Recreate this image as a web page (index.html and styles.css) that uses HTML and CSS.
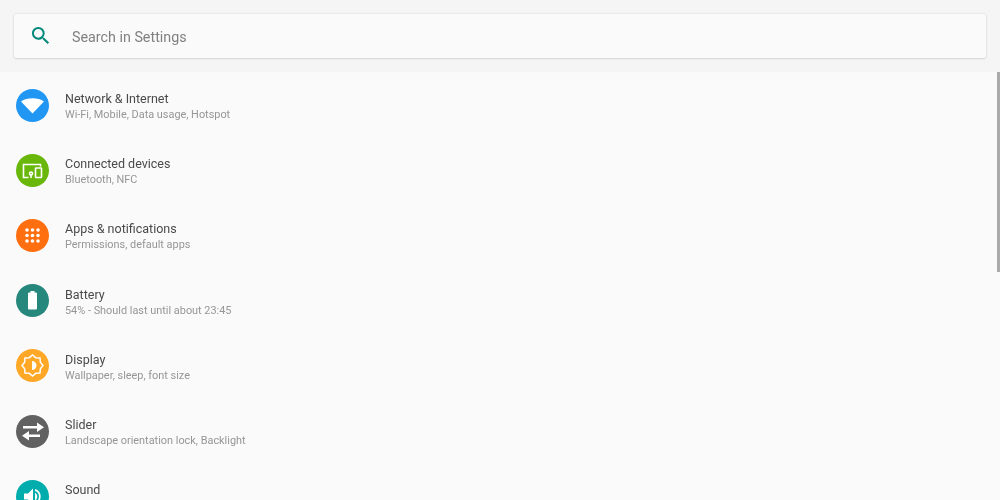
FILE: index.html
```html
<!DOCTYPE html>
<html lang="en">
<head>
<meta charset="utf-8">
<title>Settings</title>
<link rel="stylesheet" href="styles.css">
</head>
<body>
<div class="page">
  <header class="header">
    <div class="search">
      <svg class="search-icon" viewBox="0 0 24 24"><path d="M15.500 14h-.79l-.28-.27A6.470 6.470 0 0 0 16 9.500 6.500 6.500 0 1 0 9.500 16c1.610 0 3.090-.59 4.230-1.570l.27.28v.79l5 4.990L20.490 19l-4.990-5zm-6 0C7.010 14 5 11.990 5 9.500S7.010 5 9.500 5 14 7.010 14 9.500 11.990 14 9.500 14z"/></svg>
      <span class="search-text">Search in Settings</span>
    </div>
  </header>
  <main class="list">
    <div class="row">
      <span class="badge blue"><svg viewBox="0 0 33 33"><path d="M16.500 24.500 5 12.500C8 10.300 12 9.200 16.500 9.200s8.500 1.100 11.500 3.300z"/></svg></span>
      <div class="text"><div class="title">Network &amp; Internet</div><div class="sub">Wi-Fi, Mobile, Data usage, Hotspot</div></div>
    </div>
    <div class="row">
      <span class="badge green"><svg viewBox="0 0 33 33" class="outline"><path d="M12.500 23.500H7.500V10.500H24.500v2"/><rect x="19.500" y="14" width="6" height="9.500" rx=".6"/><circle cx="15" cy="19.500" r="1.500"/><path d="M15 21v3"/></svg></span>
      <div class="text"><div class="title">Connected devices</div><div class="sub">Bluetooth, NFC</div></div>
    </div>
    <div class="row">
      <span class="badge orange"><svg viewBox="0 0 33 33"><circle cx="11" cy="11" r="1.800"/><circle cx="16.500" cy="11" r="1.800"/><circle cx="22" cy="11" r="1.800"/><circle cx="11" cy="16.500" r="1.800"/><circle cx="16.500" cy="16.500" r="1.800"/><circle cx="22" cy="16.500" r="1.800"/><circle cx="11" cy="22" r="1.800"/><circle cx="16.500" cy="22" r="1.800"/><circle cx="22" cy="22" r="1.800"/></svg></span>
      <div class="text"><div class="title">Apps &amp; notifications</div><div class="sub">Permissions, default apps</div></div>
    </div>
    <div class="row">
      <span class="badge teal"><svg viewBox="0 0 33 33"><path d="M14.500 7h4v1.500h1.600c.5 0 .9.4.9.9v15.200c0 .5-.4.900-.9.900h-7.200c-.5 0-.9-.4-.9-.9V9.400c0-.5.4-.9.900-.9h1.600z"/></svg></span>
      <div class="text"><div class="title">Battery</div><div class="sub">54% - Should last until about 23:45</div></div>
    </div>
    <div class="row">
      <span class="badge amber"><svg viewBox="0 0 33 33"><path class="star" d="M27 16.500 24.350 13.250 24 9 19.750 8.650 16.500 6 13.250 8.650 9 9 8.650 13.250 6 16.500 8.650 19.750 9 24 13.250 24.350 16.500 27 19.750 24.350 24 24 24.350 19.750z"/><path d="M16 12a4.500 4.500 0 0 1 0 9z"/></svg></span>
      <div class="text"><div class="title">Display</div><div class="sub">Wallpaper, sleep, font size</div></div>
    </div>
    <div class="row">
      <span class="badge grey"><svg viewBox="0 0 33 33"><path d="M21 7.500 28 12.200l-7 4.700v-3.500H7v-2.400h14z"/><path d="M13 16.100 6 20.800l7 4.700V22h11v-2.400H13z"/></svg></span>
      <div class="text"><div class="title">Slider</div><div class="sub">Landscape orientation lock, Backlight</div></div>
    </div>
    <div class="row">
      <span class="badge cyan"><svg viewBox="0 0 33 33"><path d="M8 13.500v6h4l5 5v-16l-5 5z"/><path d="M19 12.800v7.400a4.100 4.100 0 0 0 0-7.400z"/><path d="M19 9v2a5.800 5.800 0 0 1 0 11v2a7.800 7.800 0 0 0 0-15z"/></svg></span>
      <div class="text"><div class="title">Sound</div><div class="sub">Volume, vibration, Do Not Disturb</div></div>
    </div>
  </main>
  <div class="scrollbar"></div>
</div>
</body>
</html>
```

FILE: styles.css
```css
* { box-sizing: border-box; }
html, body { margin: 0; height: 100%; overflow: hidden; }
body { font-family: Roboto, "Liberation Sans", sans-serif; background: #fafafa; }
.page { position: relative; width: 1000px; height: 500px; overflow: hidden; filter: blur(0.5px); }
.header { height: 72px; padding: 14px; background: #f5f5f5; }
.search {
  height: 44px;
  display: flex;
  align-items: center;
  padding-left: 14.500px;
  background: #fafafa;
  border-radius: 2px;
  box-shadow: 0 0 2px rgba(0,0,0,.16), 0 1px 2px rgba(0,0,0,.08);
}
.search-icon { width: 23.500px; height: 23.500px; fill: #00897b; flex: none; }
.search-text { margin-left: 20px; padding-top: 2px; font-size: 14.300px; color: #808080; }
.list { padding-top: .5px; background: #fafafa; }
.row { height: 65.200px; display: flex; align-items: center; padding-left: 16px; }
.badge { width: 33px; height: 33px; border-radius: 50%; flex: none; }
.badge svg { display: block; width: 33px; height: 33px; fill: #fff; }
.badge svg.outline { fill: none; stroke: #fff; stroke-width: 1.600; }
.star { fill: none; stroke: #fff; stroke-width: 1.500; }
.blue { background: #2196f3; }
.green { background: #6ab70b; }
.orange { background: #ff6f0f; }
.teal { background: #26877d; }
.amber { background: #ffa726; }
.grey { background: #616161; }
.cyan { background: #00acac; }
.text { margin-left: 16px; padding-top: 3px; }
.title { font-size: 12.500px; line-height: 16px; color: #4a4a4a; }
.sub { font-size: 10.900px; line-height: 15px; color: #969696; }
.scrollbar { position: absolute; right: 0; top: 72px; width: 3px; height: 200px; background: #aaa; }
```
